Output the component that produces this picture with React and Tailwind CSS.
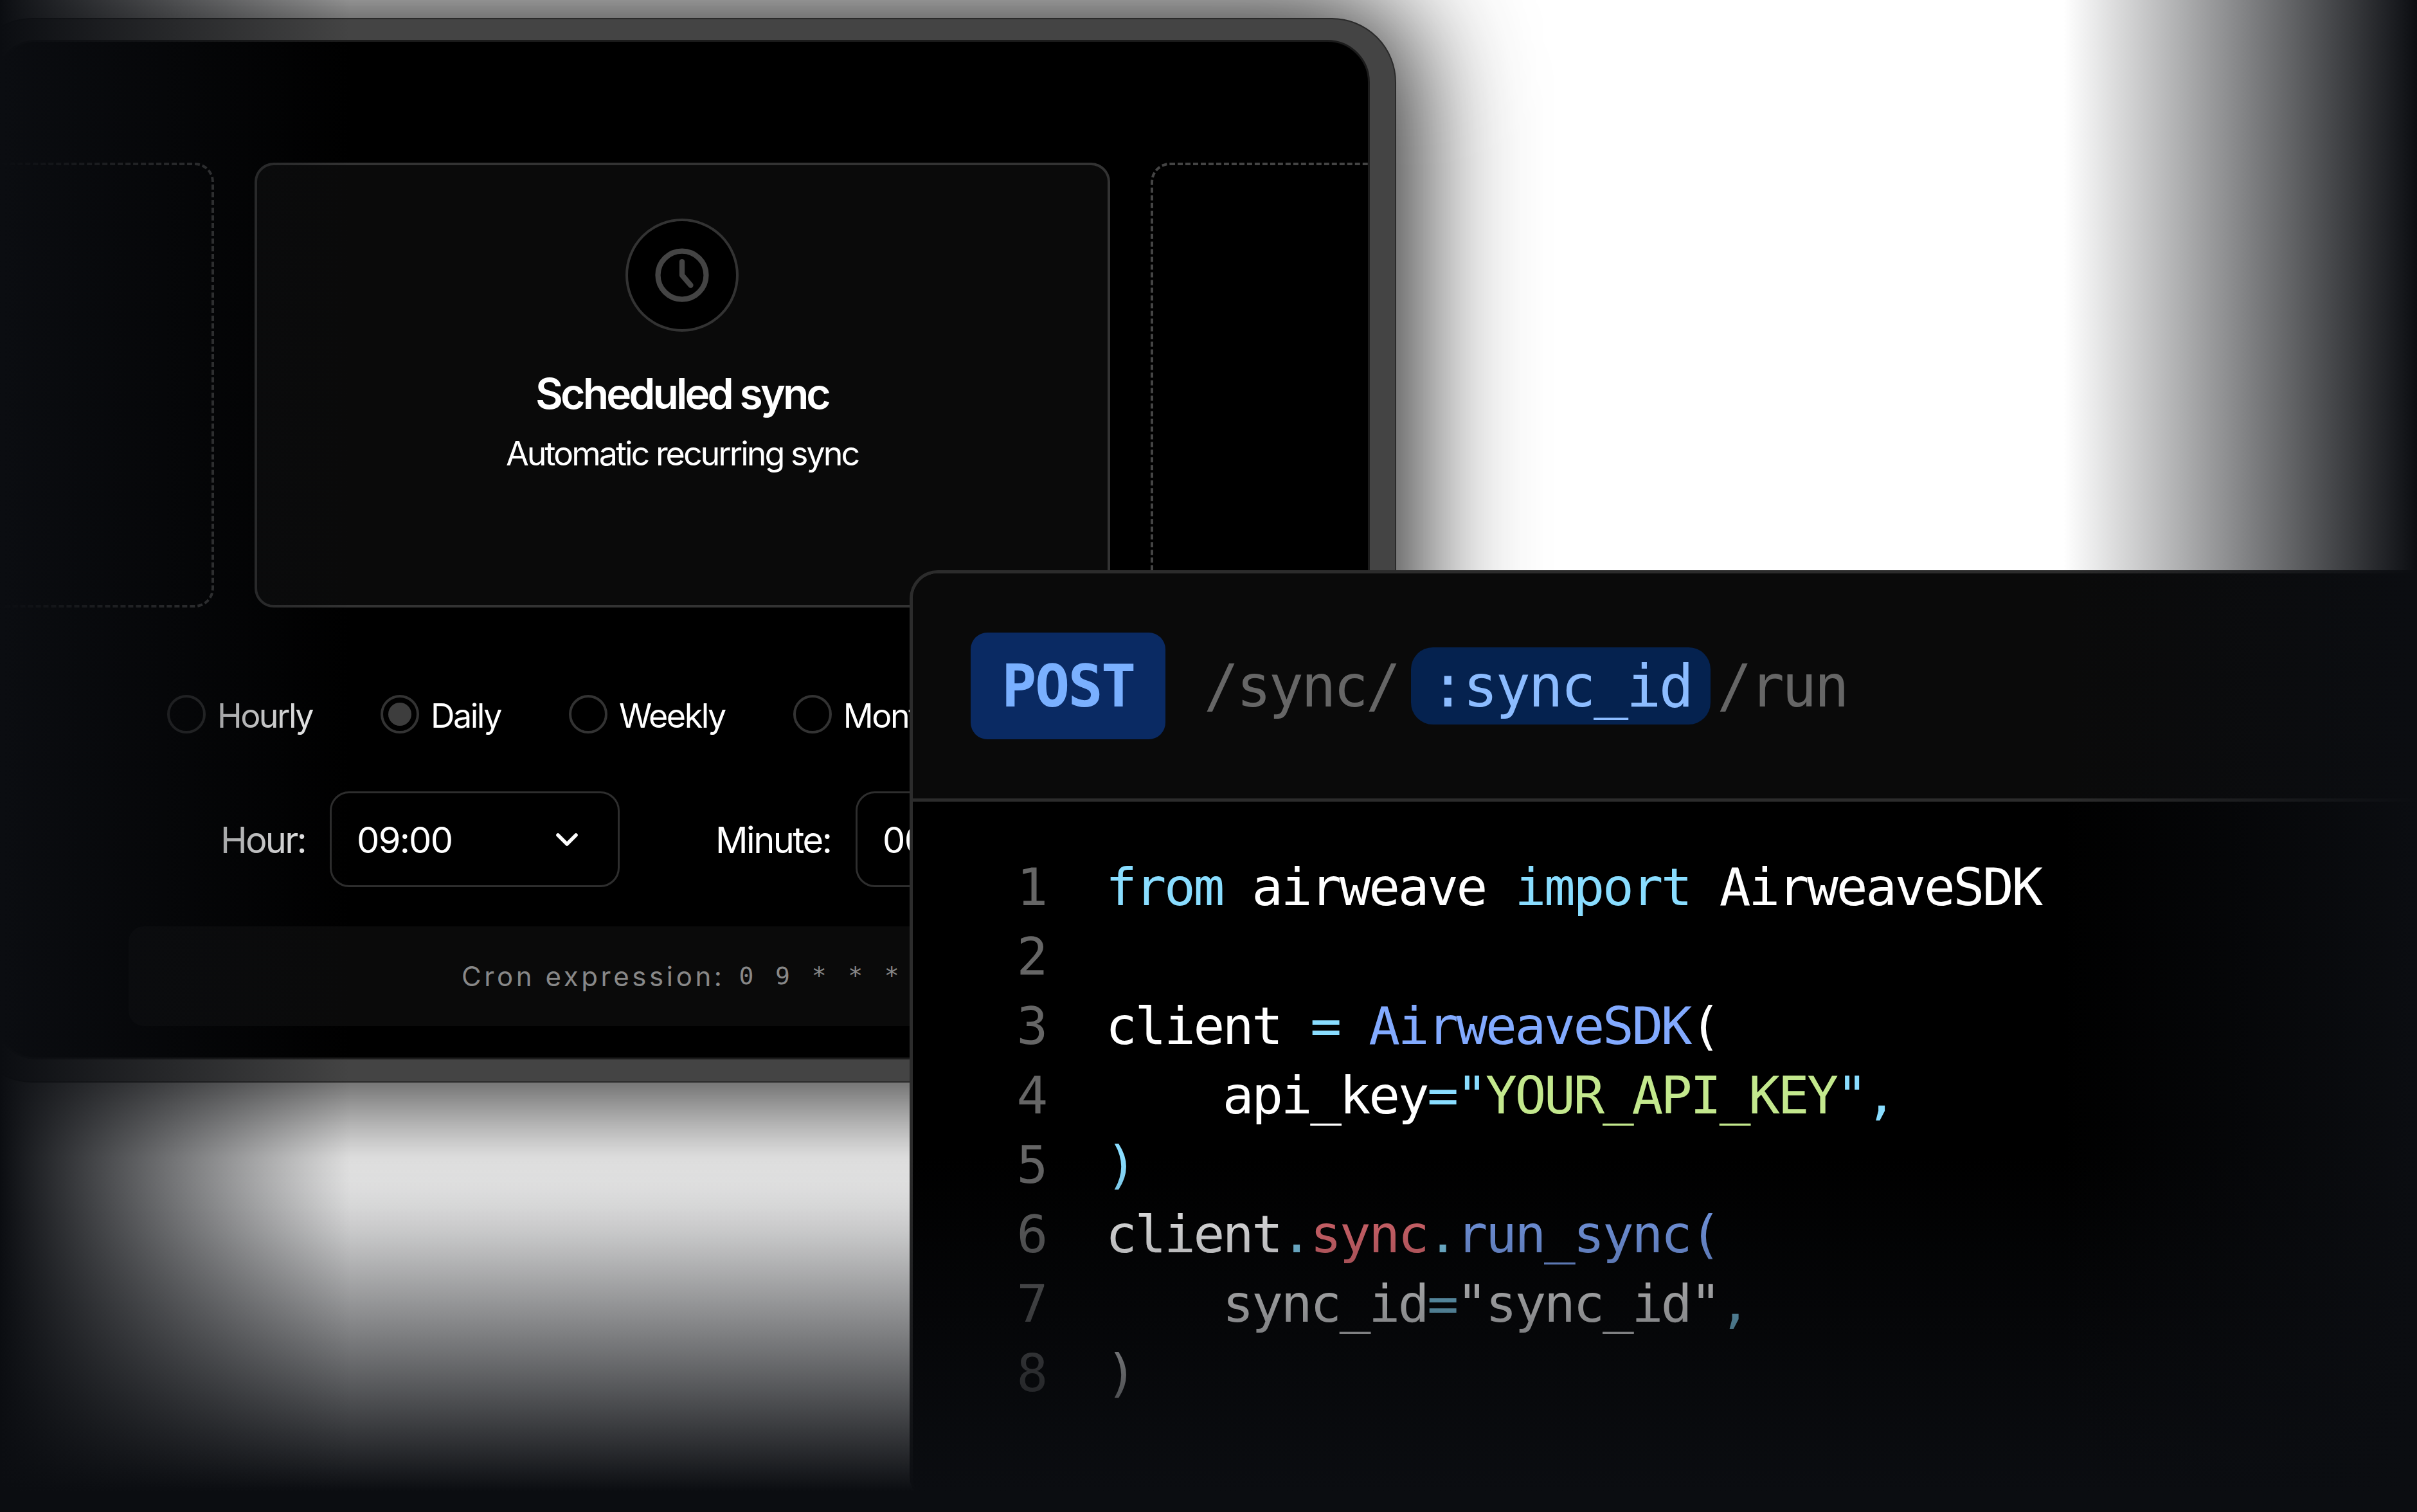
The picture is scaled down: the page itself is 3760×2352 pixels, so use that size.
import React from 'react';
import { ChevronDown } from 'lucide-react';

const sans = "font-['Inter',sans-serif]";
const mono = "font-['DejaVu_Sans_Mono',monospace]";

const C = {
  w: 'text-white',
  k: 'text-[#89ddff]',
  b: 'text-[#82aaff]',
  g: 'text-[#c3e88d]',
  r: 'text-[#f07178]',
};

const lines = [
  [['from', C.k], [' airweave ', C.w], ['import', C.k], [' AirweaveSDK', C.w]],
  [],
  [['client ', C.w], ['=', C.k], [' ', C.w], ['AirweaveSDK', C.b], ['(', C.w]],
  [['    api_key', C.w], ['="', C.k], ['YOUR_API_KEY', C.g], ['"', C.k], [',', C.k]],
  [[')', C.k]],
  [['client', C.w], ['.', C.k], ['sync', C.r], ['.', C.k], ['run_sync', C.b], ['(', C.b]],
  [['    sync_id', C.w], ['=', C.k], ['"', C.w], ['sync_id', C.w], ['"', C.w], [',', C.k]],
  [[')', C.w]],
];

function Radio({ label, checked }) {
  return (
    <div className="flex items-center gap-[18px] shrink-0">
      <span className="w-[60px] h-[60px] rounded-full border-[4px] border-[#333] flex items-center justify-center">
        {checked && <span className="w-[36px] h-[36px] rounded-full bg-[#3d3d3d]"></span>}
      </span>
      <span className="pt-[6px] text-[52px] leading-none tracking-[-2.5px] text-white">{label}</span>
    </div>
  );
}

function Select({ value, chevron }) {
  return (
    <div className="w-[451px] h-[149px] shrink-0 rounded-[30px] border-[3px] border-[#2e2e2e] flex items-center justify-between pl-[39px] pr-[51px]">
      <span className="pt-[2px] text-[56px] tracking-[-1.7px] text-white">{value}</span>
      {chevron && <ChevronDown className="w-[56px] h-[56px] text-white" strokeWidth={2.4} />}
    </div>
  );
}

export default function App() {
  return (
    <div className={`relative w-[3760px] h-[2352px] overflow-hidden bg-white ${sans}`}>
      {/* Settings window, its left side runs off the page */}
      <div className="absolute left-[-50px] top-[28px] w-[2222px] h-[1656px] rounded-[100px] bg-[#444] border-[2px] border-[#2a2a2a] pt-[32px] pr-[39px] pb-[34px] pl-[39px] shadow-[0_0_180px_30px_rgba(0,0,0,0.85)]">
        <div className="h-full rounded-[66px] bg-black border-[3px] border-[#1c1c1c] overflow-hidden">
          <div className="flex justify-center gap-[63px] pt-[188px]">
            <div className="w-[1331px] h-[692px] shrink-0 rounded-[30px] border-[4px] border-dashed border-[#444]"></div>
            <div className="w-[1331px] h-[692px] shrink-0 rounded-[30px] border-[4px] border-[#333] bg-[#0a0a0a] flex flex-col items-center pt-[83px]">
              <div className="w-[176px] h-[176px] rounded-full bg-black border-[4px] border-[#333] flex items-center justify-center">
                <svg viewBox="0 0 24 24" fill="none" stroke="#444" strokeWidth="2.2" strokeLinecap="round" strokeLinejoin="round" className="w-[90px] h-[90px]">
                  <circle cx="12" cy="12" r="10" />
                  <path d="M12 6.4V12l3.6 4.2" />
                </svg>
              </div>
              <h2 className="mt-[56px] text-[66px] leading-[80px] font-semibold tracking-[-3.9px] text-white">Scheduled sync</h2>
              <p className="mt-[22px] text-[52px] leading-[64px] tracking-[-3px] text-white">Automatic recurring sync</p>
            </div>
            <div className="w-[1331px] h-[692px] shrink-0 rounded-[30px] border-[4px] border-dashed border-[#444]"></div>
          </div>

          <div className="flex items-center gap-[106px] mt-[136px] pl-[266px]">
            <Radio label="Hourly" />
            <Radio label="Daily" checked />
            <Radio label="Weekly" />
            <Radio label="Monthly" />
          </div>

          <div className="flex items-center mt-[90px] pl-[349px]">
            <span className="pt-[2px] w-[170px] text-[56px] tracking-[-2.7px] text-white">Hour:</span>
            <Select value="09:00" chevron />
            <span className="pt-[2px] ml-[149px] w-[218px] text-[56px] tracking-[-2.5px] text-white">Minute:</span>
            <Select value="00" />
          </div>

          <div className="mx-[206px] mt-[61px] h-[155px] rounded-[24px] bg-[#0a0a0a] flex items-center justify-center gap-[22px] text-[#888]">
            <span className="text-[42px] tracking-[4.6px]">Cron expression:</span>
            <span className={`${mono} text-[38px] tracking-[5.4px] whitespace-pre`}>0 9 * * *</span>
          </div>
        </div>
      </div>

      {/* API code window */}
      <div className="absolute left-[1415px] top-[887px] w-[2400px] h-[1453px] rounded-l-[44px] bg-black border-l-[5px] border-t-[5px] border-[#2c2c2c] overflow-hidden">
        <div className="h-[355px] flex items-center pl-[90px] bg-[#0a0a0a] border-b-[5px] border-[#2c2c2c]">
          <span className={`${mono} w-[303px] h-[166px] rounded-[26px] bg-[#0a2a63] text-[#7ab0ff] text-[90px] tracking-[-2.6px] font-bold flex items-center justify-center`}>POST</span>
          <div className={`${mono} flex items-center ml-[60px] text-[90px] tracking-[-3.8px] text-[#666]`}>
            <span>/sync/</span>
            <span className="ml-[20px] w-[466px] h-[120px] rounded-[34px] bg-[#05224f] text-[#8cbcff] tracking-[-3.4px] flex items-center justify-center">:sync_id</span>
            <span className="ml-[10px]">/run</span>
          </div>
        </div>
        <div className={`${mono} pt-[79px] text-[81px] leading-[108px] tracking-[-3.3px] whitespace-pre`}>
          {lines.map((parts, i) => (
            <div key={i} className="flex">
              <span className="w-[207px] text-right text-[#666]">{i + 1}</span>
              <span className="ml-[93px]">
                {parts.map(([text, color], j) => (
                  <span key={j} className={color}>{text}</span>
                ))}
              </span>
            </div>
          ))}
        </div>
      </div>

      {/* Fade of the whole picture into the dark page edges */}
      <div className="absolute inset-0 pointer-events-none bg-[linear-gradient(to_right,#0b0d11_0px,rgba(11,13,17,0)_545px),linear-gradient(to_left,#0b0d11_0px,rgba(11,13,17,0)_550px),linear-gradient(to_bottom,rgba(11,13,17,0)_1800px,#0b0d11_2320px)]"></div>
    </div>
  );
}
